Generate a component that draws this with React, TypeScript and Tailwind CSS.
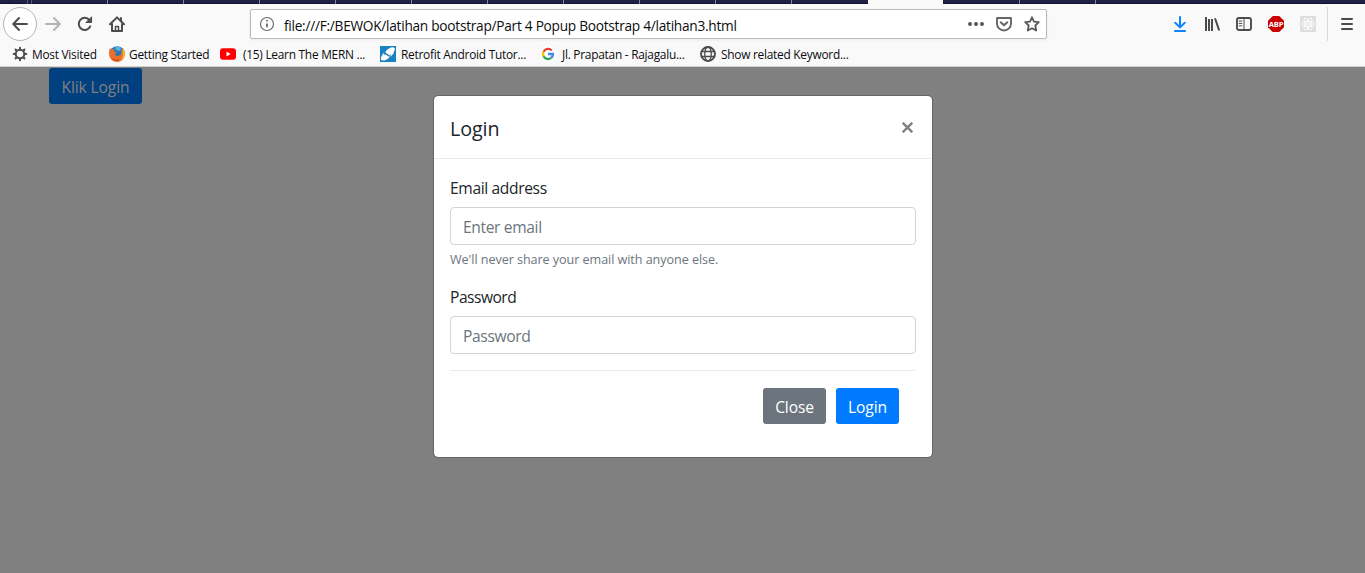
import React from "react";

const tabs = [31, 76, 76, 76, 76, 76, 76, 76, 76, 76, 76];

function TabStrip() {
  return (
    <div className="flex h-1 shrink-0 border-b border-[#0e1030] bg-[#1f2145]">
      <div className="h-1 w-7 border-r border-[#55566f]" />
      <div className="h-1 w-1 border-r border-[#55566f]" />
      {tabs.map((_, i) => (
        <div key={i} className={i < 10 ? "h-1 w-[76px] border-r border-[#85869c]" : "h-1 w-[76px]"} />
      ))}
      <div className="h-1 w-[75px] bg-[#f9f9fa]" />
      <div className="h-1 w-[77px] border-r border-[#85869c]" />
      <div className="h-1 w-[76px] border-r border-[#85869c]" />
    </div>
  );
}

function Slot({ children }: { children: React.ReactNode }) {
  return <div className="flex size-8 shrink-0 items-center justify-center">{children}</div>;
}

function Icon({ children, className = "size-4 text-[#4c4c4f]" }: { children: React.ReactNode; className?: string }) {
  return (
    <svg viewBox="0 0 16 16" className={`${className} shrink-0`} fill="none" stroke="currentColor" strokeWidth="2" strokeLinecap="round" strokeLinejoin="round">
      {children}
    </svg>
  );
}

function Toolbar() {
  return (
    <div className="flex h-[40px] items-center pl-[3px]">
      <div className="flex size-[34px] shrink-0 items-center justify-center rounded-full border border-[#b5b5b6] bg-white">
        <Icon><path d="M15 8H1.5M7 2 1.3 8 7 14" /></Icon>
      </div>
      <Slot><Icon className="size-4 text-[#b4b4b5]"><path d="M1 8h13.5M9 2l5.7 6L9 14" /></Icon></Slot>
      <Slot>
        <Icon><path d="M13.2 10.5A6 6 0 1 1 12.4 4" /><path d="M14.6 1.2v5.3H9.3z" fill="currentColor" strokeWidth="1" /></Icon>
      </Slot>
      <Slot>
        <Icon><path d="M1 8.3 8 1.4l7 6.9" /><path d="M3 8v7h10V8" /><path d="M6.5 15v-4.5h3V15" strokeWidth="1.5" /><path d="M12 2v3" /></Icon>
      </Slot>
      <div className="ml-[117px] flex h-[30px] w-[797px] shrink-0 items-center rounded-[2px] border border-[#b9b9ba] bg-white pr-[6px] pl-2 shadow-[0_1px_3px_rgba(0,0,0,0.06)]">
        <Icon className="size-4 text-[#6c6c6e]"><circle cx="8" cy="8" r="6.5" strokeWidth="1.2" /><path d="M8 7.5v3.8" strokeWidth="1.8" strokeLinecap="butt" /><path d="M8 4.6v.2" strokeWidth="1.8" /></Icon>
        <span className="ml-[9px] w-[480px] pt-[3px] text-[13.7px] leading-5 tracking-[-0.27px] whitespace-nowrap text-[#0c0c0d]">file:///F:/BEWOK/latihan bootstrap/Part 4 Popup Bootstrap 4/latihan3.html</span>
        <div className="ml-auto flex gap-3">
          <Icon className="size-4 text-[#58585a]"><g fill="currentColor" stroke="none"><circle cx="2" cy="8" r="2" /><circle cx="8" cy="8" r="2" /><circle cx="14" cy="8" r="2" /></g></Icon>
          <Icon className="size-4 text-[#666668]"><path d="M1 2h14v5.5a7 7 0 0 1-14 0z" strokeWidth="1.9" /><path d="m4.7 6.3 3.3 3 3.3-3" /></Icon>
          <Icon className="size-4 text-[#58585a]"><path d="m8 1.3 2 4.3 4.8.6-3.5 3.3.9 5L8 12.3l-4.2 2.2.9-5L1.2 6.2 6 5.6z" strokeWidth="1.8" /></Icon>
        </div>
      </div>
      <div className="ml-auto flex h-full items-center pr-[2px]">
        <Slot><Icon className="size-4 text-[#0a84ff]"><path d="M8 1v10M3.2 6.7 8 11.4l4.8-4.7M3 15h10" /></Icon></Slot>
        <Slot><Icon><path d="M2 1v14M5 3v12M8 3v12M11 2.2l4.2 12.3" strokeWidth="2" strokeLinecap="butt" /></Icon></Slot>
        <Slot><Icon><rect x="1" y="2" width="14" height="12" rx="2" strokeWidth="1.9" /><path d="M8 2v12" strokeWidth="1" /><path d="M3.2 5h2.6M3.2 7.4h2.6M3.2 9.8h2.6" strokeWidth="1" /></Icon></Slot>
        <Slot>
          <div className="flex size-4 items-center justify-center bg-[#c80000] text-[7.5px] leading-4 font-bold tracking-[-0.2px] text-white [clip-path:polygon(30%_0,70%_0,100%_30%,100%_70%,70%_100%,30%_100%,0_70%,0_30%)]">ABP</div>
        </Slot>
        <Slot>
          <div className="size-4 bg-[#dedede]">
            <Icon className="size-4 text-white"><g strokeWidth=".9"><ellipse cx="8" cy="8" rx="6.5" ry="2.5" /><ellipse cx="8" cy="8" rx="6.5" ry="2.5" transform="rotate(60 8 8)" /><ellipse cx="8" cy="8" rx="6.5" ry="2.5" transform="rotate(120 8 8)" /><circle cx="8" cy="8" r="1" /></g></Icon>
          </div>
        </Slot>
        <div className="mr-[3px] ml-[3px] h-[34px] w-px bg-[#d9d9da]" />
        <Slot><Icon><path d="M3 3h10M3 8h10M3 13h10" /></Icon></Slot>
      </div>
    </div>
  );
}

const gearTeeth = [0, 45, 90, 135, 180, 225, 270, 315];

function Bookmark({ icon, label, className }: { icon: React.ReactNode; label: string; className: string }) {
  return (
    <div className={`${className} flex shrink-0 items-center`}>
      {icon}
      <span className="whitespace-nowrap">{label}</span>
    </div>
  );
}

function Bookmarks() {
  return (
    <div className="flex h-[22px] items-center pb-[2px] pl-3 text-[11.9px] leading-4 tracking-[-0.26px] text-[#0c0c0d]">
      <Bookmark
        className="w-[97px] gap-1"
        label="Most Visited"
        icon={<Icon><circle cx="8" cy="8" r="4.3" strokeWidth="2.1" />{gearTeeth.map((a) => <path key={a} d="M8 3V1.7" transform={`rotate(${a} 8 8)`} />)}</Icon>}
      />
      <Bookmark
        className="w-[111px] gap-1"
        label="Getting Started"
        icon={
          <svg viewBox="0 0 16 16" className="size-4 shrink-0">
            <circle cx="8.2" cy="7.6" r="7.4" fill="#2378bd" />
            <path d="M6 1.2a7 7 0 0 1 6 .5L11 5 7 4z" fill="#54b6e4" />
            <path d="M.9 2.3c.8.2 1.4.8 1.8 1.3 1-.5 2.4-.4 3.4 0-.9.6-1.1 1.3-1 2l2.7.6c-.1 1-1.6 1.1-1.7 2.3.8 1.9 4 1.9 5.5.1 1.2-1.5.9-3.8-.2-5.4 1 .2 1.8 1.2 2 2 .1-1.6-.5-2.9-1.4-4C14.6 2.4 16 5 16 8a8 8 0 0 1-16 0C0 5.5.2 3.7.9 2.3z" fill="#e8702a" />
            <path d="M13.5 2.5C17 7 16 13 11 15.2c2-2 3-4 3-6.5z" fill="#fbc531" />
            <path d="M1 9c1 4 6 6 10 4-2 3-8 2.5-10-4z" fill="#c63d26" />
          </svg>
        }
      />
      <Bookmark
        className="w-[160px] gap-[7px]"
        label="(15) Learn The MERN ..."
        icon={<svg viewBox="0 0 16 16" className="size-4 shrink-0"><rect y="2.2" width="16" height="11.6" rx="3" fill="#f00" /><path d="m6.5 5.5 4.2 2.5-4.2 2.5z" fill="#fff" /></svg>}
      />
      <Bookmark
        className="w-[160px] gap-[5px]"
        label="Retrofit Android Tutor..."
        icon={
          <svg viewBox="0 0 16 16" className="size-4 shrink-0">
            <path fill="#1a82c0" d="M0 0h16v16H0z" />
            <ellipse cx="10" cy="5.1" rx="5.4" ry="2.9" transform="rotate(-32 10 5.1)" fill="#fff" />
            <ellipse cx="5.6" cy="11" rx="5.2" ry="2.7" transform="rotate(-32 5.6 11)" fill="#fff" />
            <path d="M11 5.500 14.500 2 13.500 7.500 10.300 11z" fill="#fff" />
            <path d="M3.500 6.800 1.400 10.500 1.200 14.300 5 11.500z" fill="#fff" />
            <path d="m4.200 6.600 5.600 3.800" stroke="#1a82c0" strokeWidth="1.300" />
          </svg>
        }
      />
      <Bookmark
        className="w-[160px] gap-[6px]"
        label="Jl. Prapatan - Rajagalu..."
        icon={
          <svg viewBox="0 0 16 16" className="size-4 shrink-0" fill="none" strokeWidth="2.3">
            <circle cx="8" cy="8" r="8" fill="#fff" />
            <path d="M11.7 4.5A5 5 0 0 0 3.5 5.8" stroke="#ea4335" />
            <path d="M3.5 5.8a5 5 0 0 0 0 4.4" stroke="#fbbc05" />
            <path d="M3.5 10.2a5 5 0 0 0 7.7 1.6" stroke="#34a853" />
            <path d="M11.2 11.8A5 5 0 0 0 13 8H8" stroke="#4285f4" />
          </svg>
        }
      />
      <Bookmark
        className="gap-[5px]"
        label="Show related Keyword..."
        icon={<Icon><circle cx="8" cy="8" r="7" strokeWidth="1.9" /><ellipse cx="8" cy="8" rx="3.3" ry="7" strokeWidth="1.3" /><path d="M1.5 5.5h13M1.5 10.5h13" strokeWidth="1.3" /></Icon>}
      />
    </div>
  );
}

const inputClass = "block h-[38px] w-full rounded border border-[#ced4da] bg-white px-3 pt-[2px] text-[15.6px] tracking-[-0.36px] outline-none placeholder:text-[#6c757d] placeholder:opacity-100";
const buttonClass = "h-[38px] rounded border border-transparent bg-clip-padding pt-[2px] text-[15.6px] leading-6 tracking-[-0.12px] whitespace-nowrap";

function LoginModal() {
  return (
    <div role="dialog" className="absolute top-7 left-[433px] w-[500px] rounded-[5px] border border-[#666] bg-white bg-clip-padding text-[15.6px] leading-6 text-[#212529]">
      <div className="flex justify-between border-b border-[#e9ecef] p-4">
        <h5 className="pt-[3px] text-[19.7px] leading-[27px] tracking-[-0.1px]">Login</h5>
        <button aria-label="Close" className="mr-[2px] flex h-[30px] w-[13px] items-center justify-center text-[#7f7f7f]">
          <svg viewBox="0 0 11 11" className="size-[11px]" stroke="currentColor" strokeWidth="2.3"><path d="m.7.7 9.6 9.6M10.3.7.7 10.3" /></svg>
        </button>
      </div>
      <div className="p-4">
        <label className="mb-2 block pt-[2px] leading-[22px] tracking-[-0.36px]">Email address</label>
        <input type="email" placeholder="Enter email" className={inputClass} />
        <small className="mt-1 block pt-px text-[12.6px] leading-[19px] tracking-[-0.06px] text-[#6c757d]">We'll never share your email with anyone else.</small>
        <label className="mt-[15px] mb-2 block pt-[2px] leading-[22px] tracking-[-0.5px]">Password</label>
        <input type="password" placeholder="Password" className={inputClass} />
        <div className="mt-4 flex justify-end gap-2 border-t border-[#e9ecef] p-4">
          <button className={`${buttonClass} w-[65px] bg-[#6c757d] text-white`}>Close</button>
          <button className={`${buttonClass} w-[65px] bg-[#007bff] text-white`}>Login</button>
        </div>
      </div>
    </div>
  );
}

export default function App() {
  return (
    <div className="flex h-[573px] w-[1365px] flex-col overflow-hidden bg-[#f9f9fa] font-['Open_Sans','Noto_Sans',sans-serif]">
      <TabStrip />
      <div className="h-[63px] shrink-0 border-b border-[#d0d0d1]">
        <Toolbar />
        <Bookmarks />
      </div>
      <main className="relative flex-1 bg-[#808080] pl-12">
        <button className={`${buttonClass} block w-[95px] bg-[#004080] text-[#808080]`}>Klik Login</button>
        <LoginModal />
      </main>
    </div>
  );
}
